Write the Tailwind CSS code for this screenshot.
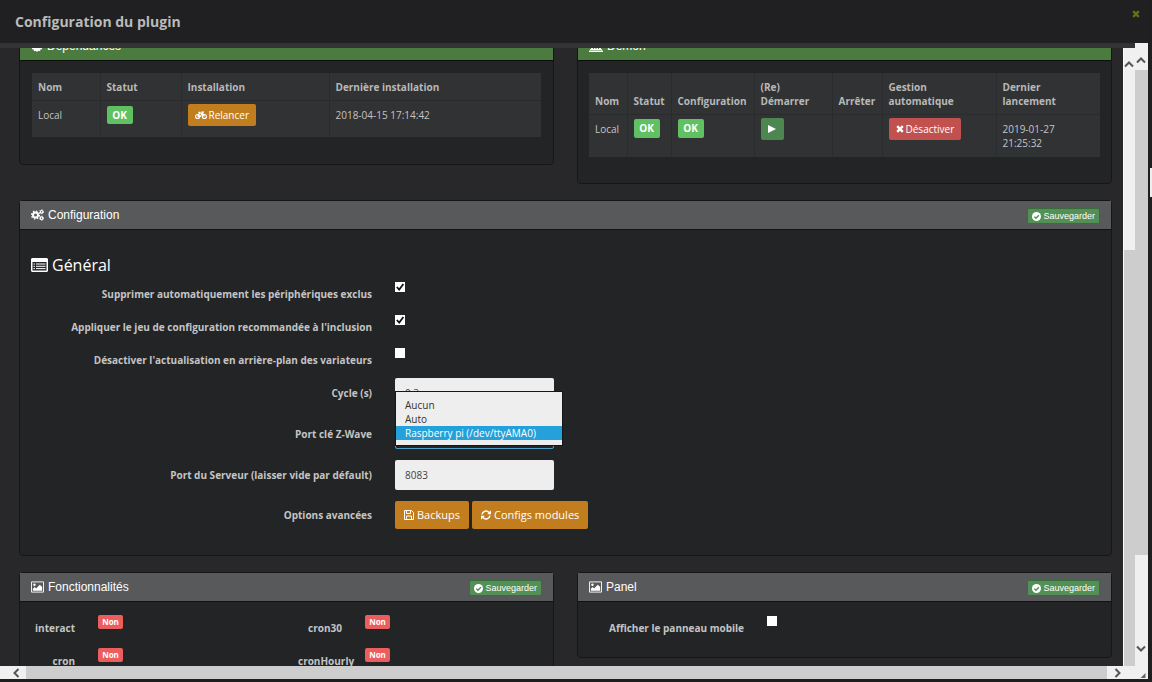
<!DOCTYPE html>
<html lang="fr">
<head>
<meta charset="utf-8">
<title>Configuration du plugin</title>
<script src="https://cdn.jsdelivr.net/npm/@tailwindcss/browser@4"></script>
</head>
<body class="h-screen overflow-hidden bg-[#1b1a1b] font-['Open_Sans','Noto_Sans',sans-serif] text-[10px] leading-[14px] text-[#c4c4c4]">
<svg class="hidden" aria-hidden="true">
  <symbol id="i-check" viewBox="0 0 16 16"><circle cx="8" cy="8" r="8" fill="currentColor"/><path d="M4 8.2l3 3 5.2-5.4" fill="none" stroke="#4f8f52" stroke-width="2.4"/></symbol>
  <symbol id="i-tick" viewBox="0 0 10 10"><path d="M1.800 5l2.400 2.600L8.400 2" fill="none" stroke="#111" stroke-width="1.800"/></symbol>
  <symbol id="i-picture" viewBox="0 0 14 12"><path d="M.5.5h13v11H.5z" fill="none" stroke="currentColor"/><circle cx="3.7" cy="3.6" r="1.3" fill="currentColor"/><path d="M2 10V8l2-2 1.5 1.5L9.500 3.500 12 6v4z" fill="currentColor"/></symbol>
  <symbol id="i-times" viewBox="0 0 10 10"><path d="M1.500 1.500l7 7M8.500 1.500l-7 7" stroke="currentColor" stroke-width="3"/></symbol>
  <symbol id="i-up" viewBox="0 0 10 8"><path d="M1 6.500l4-4 4 4" fill="none" stroke="#555" stroke-width="2"/></symbol>
</svg>
<div class="flex h-full">
  <div class="flex min-w-0 flex-1 flex-col">
    <header class="flex h-[43px] shrink-0 items-start justify-between bg-[#202022] pl-[15px] pr-2">
      <h1 class="pt-3 text-sm leading-5 font-bold text-[#bababa]">Configuration du plugin</h1>
      <button type="button" aria-label="Fermer" class="mt-[10px] text-[#6b6d12]"><svg class="size-2"><use href="#i-times"/></svg></button>
    </header>

    <div class="flex min-h-0 flex-1">
      <div class="flex min-w-0 flex-1 flex-col">
        <div class="h-[5px] shrink-0 bg-[#333335]"></div>
        <div class="flex min-h-0 flex-1">
          <main class="min-w-0 flex-1 overflow-hidden bg-[#28282a] pr-[11px] pl-[19px]">
            <div class="-mt-[17px] flex flex-col gap-4">

              <div class="grid grid-cols-2 items-start gap-[23px]">
                <section class="rounded-sm border border-[#151617] bg-[#232426]">
                  <h2 class="flex h-[29px] items-center gap-1 border-b border-[#0d0f0d] bg-[#4b7b3f] px-[11px] font-['Liberation_Sans',Arial,sans-serif] text-xs text-white">
                    <svg class="size-3" viewBox="0 0 12 12" fill="currentColor"><path d="M6 0l1.300 1.300L9 .8l.5 1.700 1.700.5-.5 1.700L12 6l-1.300 1.300.5 1.700-1.700.5L9 11.200l-1.700-.5L6 12l-1.300-1.300-1.700.5-.5-1.700L.8 9l.5-1.700L0 6l1.300-1.300L.8 3l1.700-.5L3 .8l1.700.5z"/></svg>Dépendances</h2>
                  <div class="px-3 pt-3 pb-[27px]">
                    <table class="w-full table-fixed bg-[#313234] text-left align-top">
                      <colgroup><col class="w-[68px]"><col class="w-[81px]"><col class="w-[148px]"><col></colgroup>
                      <thead class="text-[#b8b8b8]"><tr class="h-[27px]">
                        <th class="border-r border-[#2a2b2d] px-1.5 pt-0.5">Nom</th><th class="border-r border-[#2a2b2d] px-1.5 pt-0.5">Statut</th><th class="border-r border-[#2a2b2d] px-1.5 pt-0.5">Installation</th><th class="px-1.5 pt-0.5">Dernière installation</th></tr></thead>
                      <tbody class="border-t border-[#2a2b2d]"><tr class="h-[37px] align-top">
                        <td class="border-r border-[#2a2b2d] px-1.5 pt-[7px]">Local</td>
                        <td class="border-r border-[#2a2b2d] px-1.5 pt-[5px]"><span class="block h-[18px] w-[26px] rounded-xs bg-[#5fc162] text-center leading-[18px] font-bold text-white">OK</span></td>
                        <td class="border-r border-[#2a2b2d] px-1.5 pt-[3px]"><button type="button" class="flex h-[22px] items-center gap-0.5 rounded-xs bg-[#c27e1e] px-[7px] text-white">
                          <svg class="h-2.5 w-3" viewBox="0 0 16 11" fill="none" stroke="currentColor" stroke-width="1.500"><circle cx="3.500" cy="7.500" r="2.700"/><circle cx="12.500" cy="7.500" r="2.700"/><path d="M3.500 7.500L6 3h4l-3 4.500H3.500M4.500 2h2.500M12.500 7.500L9.500 1.500h2.500"/></svg>Relancer</button></td>
                        <td class="px-1.5 pt-[7px]">2018-04-15 17:14:42</td></tr></tbody>
                    </table>
                  </div>
                </section>

                <section class="rounded-sm border border-[#151617] bg-[#232426]">
                  <h2 class="flex h-[29px] items-center gap-1 border-b border-[#0d0f0d] bg-[#4b7b3f] px-[11px] font-['Liberation_Sans',Arial,sans-serif] text-xs text-white">
                    <svg class="h-3 w-3.5" viewBox="0 0 14 12" fill="currentColor"><path d="M7 0l7 3v1H0V3zM2 4.500h2V9h1V4.500h1.500V9h1V4.500H9V9h1V4.500h2V9h1v1H1V9h1zM0 10.500h14V12H0z"/></svg>Démon</h2>
                  <div class="px-[11px] pt-3 pb-[26px]">
                    <table class="w-full table-fixed bg-[#313234] text-left">
                      <colgroup><col class="w-[38px]"><col class="w-[44px]"><col class="w-[83px]"><col class="w-[78px]"><col class="w-[50px]"><col class="w-[114px]"><col></colgroup>
                      <thead class="text-[#b8b8b8]"><tr class="h-[41px] align-bottom">
                        <th class="border-r border-[#2a2b2d] pb-1.5 pl-1.5">Nom</th><th class="border-r border-[#2a2b2d] pb-1.5 pl-1.5">Statut</th><th class="border-r border-[#2a2b2d] pb-1.5 pl-1.5">Configuration</th><th class="border-r border-[#2a2b2d] pb-1.5 pl-1.5">(Re)<br>Démarrer</th><th class="border-r border-[#2a2b2d] pb-1.5 pl-1.5">Arrêter</th><th class="border-r border-[#2a2b2d] pb-1.5 pl-1.5">Gestion<br>automatique</th><th class="pb-1.5 pl-1.5">Dernier<br>lancement</th></tr></thead>
                      <tbody class="border-t border-[#2a2b2d]"><tr class="h-[43px] align-top">
                        <td class="border-r border-[#2a2b2d] pt-[7px] pl-1.5">Local</td>
                        <td class="border-r border-[#2a2b2d] pt-1 pl-1.5"><span class="block h-[19px] w-[26px] rounded-xs bg-[#5fc162] text-center leading-[19px] font-bold text-white">OK</span></td>
                        <td class="border-r border-[#2a2b2d] pt-1 pl-1.5"><span class="block h-[19px] w-[26px] rounded-xs bg-[#5fc162] text-center leading-[19px] font-bold text-white">OK</span></td>
                        <td class="border-r border-[#2a2b2d] pt-[3px] pl-1.5"><button type="button" aria-label="Démarrer" class="flex h-[22px] w-[23px] items-center justify-center rounded-xs bg-[#4d8650] text-white"><svg class="size-2" viewBox="0 0 8 8"><path d="M0 0l8 4-8 4z" fill="currentColor"/></svg></button></td>
                        <td class="border-r border-[#2a2b2d]"></td>
                        <td class="border-r border-[#2a2b2d] pt-[3px] pl-1.5"><button type="button" class="flex h-[22px] items-center gap-0.5 rounded-xs bg-[#c0514e] px-[7px] text-white"><svg class="size-2"><use href="#i-times"/></svg>Désactiver</button></td>
                        <td class="pt-[7px] pl-1.5">2019-01-27<br>21:25:32</td></tr></tbody>
                    </table>
                  </div>
                </section>
              </div>

              <section class="rounded-sm border border-[#151617] bg-[#232426]">
                <div class="flex h-[29px] items-end justify-between border-b border-[#121213] bg-[#58595b] px-[11px] pb-[5px] font-['Liberation_Sans',Arial,sans-serif]">
                  <h2 class="flex h-[18px] items-center gap-1 text-xs text-white">
                    <svg class="h-3 w-[13px]" viewBox="0 0 13 12" fill="none" stroke="currentColor"><circle cx="4.500" cy="6" r="2.500" stroke-width="2"/><circle cx="4.500" cy="6" r="3.900" stroke-width="1.400" stroke-dasharray="1.530 1.530"/><circle cx="10.600" cy="2.800" r="1.300" stroke-width="1.200"/><circle cx="10.600" cy="2.800" r="2.100" stroke-width=".8" stroke-dasharray="1.100 1.100"/><circle cx="10.600" cy="9.200" r="1.300" stroke-width="1.200"/><circle cx="10.600" cy="9.200" r="2.100" stroke-width=".8" stroke-dasharray="1.100 1.100"/></svg>Configuration</h2>
                  <button type="button" class="flex h-4 items-center gap-0.5 rounded-xs border border-[#3d6b40] bg-[#529055] px-1 text-[9px] text-white"><svg class="size-[9px]"><use href="#i-check"/></svg>Sauvegarder</button>
                </div>
                <form class="px-[11px] pb-[26px]">
                  <h3 class="flex h-[49px] items-end gap-1 pb-0.5 text-base leading-6 text-white">
                    <svg class="mb-[5px] h-[14px] w-[17px]" viewBox="0 0 17 14"><path d="M1 0h15l1 1v12l-1 1H1l-1-1V1zM1.500 4v8.500h14V4z" fill="currentColor" fill-rule="evenodd"/><path d="M2.500 6h1.500M2.500 8.300h1.500M2.500 10.600h1.500M5 6h9.500M5 8.300h9.500M5 10.600h9.500" stroke="currentColor"/></svg>Général</h3>
                  <div class="grid grid-cols-[341px_1fr] gap-x-[23px]">
                    <label for="o1" class="flex h-[33px] items-center justify-end pb-[3px] font-bold">Supprimer automatiquement les périphériques exclus</label>
                    <div class="pt-[3px]"><div class="relative size-[10px]"><input id="o1" type="checkbox" checked class="peer block size-[10px] appearance-none bg-white"><svg class="pointer-events-none absolute inset-0 hidden size-[10px] peer-checked:block"><use href="#i-tick"/></svg></div></div>
                    <label for="o2" class="flex h-[33px] items-center justify-end pb-[3px] font-bold">Appliquer le jeu de configuration recommandée à l'inclusion</label>
                    <div class="pt-[3px]"><div class="relative size-[10px]"><input id="o2" type="checkbox" checked class="peer block size-[10px] appearance-none bg-white"><svg class="pointer-events-none absolute inset-0 hidden size-[10px] peer-checked:block"><use href="#i-tick"/></svg></div></div>
                    <label for="o3" class="flex h-[33px] items-center justify-end pb-[3px] font-bold">Désactiver l'actualisation en arrière-plan des variateurs</label>
                    <div class="pt-[3px]"><div class="relative size-[10px]"><input id="o3" type="checkbox" class="peer block size-[10px] appearance-none bg-white"><svg class="pointer-events-none absolute inset-0 hidden size-[10px] peer-checked:block"><use href="#i-tick"/></svg></div></div>
                    <label for="cycle" class="flex h-[41px] items-center justify-end pb-3 font-bold">Cycle (s)</label>
                    <div><input id="cycle" type="text" value="0.3" class="block h-[30px] w-[159px] rounded-xs bg-[#eee] px-2.5 text-[#444]"></div>
                    <label for="port" class="flex h-[41px] items-center justify-end pb-3 font-bold">Port clé Z-Wave</label>
                    <div class="relative">
                      <select id="port" class="block h-[30px] w-[159px] appearance-none rounded-xs border border-[#4f9fc4] bg-[#232426] px-2.5 text-[#232426]"><option>Raspberry pi (/dev/ttyAMA0)</option></select>
                      <ul role="listbox" aria-label="Port clé Z-Wave" class="absolute -top-7 left-0 w-[168px] border border-[#151617] bg-[#eee] pt-1.5 pb-[5px] text-[#333]">
                        <li role="option" class="px-[9px]">Aucun</li>
                        <li role="option" class="px-[9px]">Auto</li>
                        <li role="option" aria-selected="true" class="bg-[#24a0da] px-[9px] text-white">Raspberry pi (/dev/ttyAMA0)</li>
                      </ul>
                    </div>
                    <label for="srv" class="flex h-[41px] items-center justify-end pb-3 font-bold">Port du Serveur (laisser vide par défault)</label>
                    <div><input id="srv" type="text" value="8083" class="block h-[30px] w-[159px] rounded-xs bg-[#eee] px-2.5 text-[#444]"></div>
                    <div class="flex h-[28px] items-center justify-end font-bold">Options avancées</div>
                    <div class="flex gap-[3px] text-[11px] text-white">
                      <button type="button" class="flex h-[28px] items-center gap-[3px] rounded-xs bg-[#c27e1e] px-[9px]"><svg class="size-[10px]" viewBox="0 0 10 10" fill="none" stroke="currentColor"><path d="M.5.5h7l2 2v7h-9zM2.500.5v3h4v-3M2.500 9.500v-3.500h5v3.500"/></svg>Backups</button>
                      <button type="button" class="flex h-[28px] items-center gap-[3px] rounded-xs bg-[#c27e1e] px-[9px]"><svg class="size-[10px]" viewBox="0 0 10 10"><path d="M1 4.500A4 4 0 0 1 8 2.500M9 5.500A4 4 0 0 1 2 7.500" fill="none" stroke="currentColor" stroke-width="1.500"/><path d="M10 .3V4.200H6.100zM0 9.700V5.800h3.900z" fill="currentColor"/></svg>Configs modules</button>
                    </div>
                  </div>
                </form>
              </section>

              <div class="grid grid-cols-2 items-start gap-[23px]">
                <section class="rounded-sm border border-[#151617] bg-[#232426]">
                  <div class="flex h-[29px] items-end justify-between border-b border-[#121213] bg-[#58595b] px-[11px] pb-[5px] font-['Liberation_Sans',Arial,sans-serif]">
                    <h2 class="flex h-[18px] items-center gap-1 text-xs text-white"><svg class="h-3 w-[13px]"><use href="#i-picture"/></svg>Fonctionnalités</h2>
                    <button type="button" class="flex h-4 items-center gap-0.5 rounded-xs border border-[#3d6b40] bg-[#529055] px-1 text-[9px] text-white"><svg class="size-[9px]"><use href="#i-check"/></svg>Sauvegarder</button>
                  </div>
                  <div class="grid grid-cols-[44px_177px_44px_1fr] gap-x-[23px] px-[11px] pt-3">
                    <div class="flex h-[33px] justify-end pt-[7px] font-bold">interact</div>
                    <div class="pt-px"><span class="block h-[14px] w-[25px] rounded-xs bg-[#ec5d5d] text-center text-[8px] font-bold text-white">Non</span></div>
                    <div class="flex h-[33px] justify-end pt-[7px] font-bold">cron30</div>
                    <div class="pt-px"><span class="block h-[14px] w-[25px] rounded-xs bg-[#ec5d5d] text-center text-[8px] font-bold text-white">Non</span></div>
                    <div class="flex h-[33px] justify-end pt-[7px] font-bold">cron</div>
                    <div class="pt-px"><span class="block h-[14px] w-[25px] rounded-xs bg-[#ec5d5d] text-center text-[8px] font-bold text-white">Non</span></div>
                    <div class="h-[33px] pt-[7px] font-bold">cronHourly</div>
                    <div class="pt-px"><span class="block h-[14px] w-[25px] rounded-xs bg-[#ec5d5d] text-center text-[8px] font-bold text-white">Non</span></div>
                  </div>
                </section>
                <section class="rounded-sm border border-[#151617] bg-[#232426]">
                  <div class="flex h-[29px] items-end justify-between border-b border-[#121213] bg-[#58595b] px-[11px] pb-[5px] font-['Liberation_Sans',Arial,sans-serif]">
                    <h2 class="flex h-[18px] items-center gap-1 text-xs text-white"><svg class="h-3 w-[13px]"><use href="#i-picture"/></svg>Panel</h2>
                    <button type="button" class="flex h-4 items-center gap-0.5 rounded-xs border border-[#3d6b40] bg-[#529055] px-1 text-[9px] text-white"><svg class="size-[9px]"><use href="#i-check"/></svg>Sauvegarder</button>
                  </div>
                  <div class="grid grid-cols-[155px_1fr] gap-x-[23px] px-[11px] pt-3 pb-2.5">
                    <label for="mob" class="flex h-[33px] justify-end pt-[7px] font-bold">Afficher le panneau mobile</label>
                    <div class="pt-0.5"><input id="mob" type="checkbox" class="block size-[10px] appearance-none bg-white"></div>
                  </div>
                </section>
              </div>
            </div>
          </main>
          <!-- inner scrollbar -->
          <div class="flex w-[12px] shrink-0 flex-col border-l border-[#fafafa] bg-[#f0f0f0]">
            <div class="h-[202px] pt-3"><svg class="h-2 w-[10px]"><use href="#i-up"/></svg></div>
            <div class="flex-1 bg-[#cdcdcd]"></div>
          </div>
        </div>
      </div>
      <!-- outer scrollbar -->
      <div class="flex w-[13px] shrink-0 flex-col bg-[#f0f0f0]">
        <div class="h-[27px] pt-[13px] pl-px"><svg class="h-2 w-[10px]"><use href="#i-up"/></svg></div>
        <div class="h-[485px] bg-[#cdcdcd]"></div>
        <div class="flex flex-1 flex-col justify-end pb-[13px] pl-px"><svg class="h-2 w-[10px] rotate-180"><use href="#i-up"/></svg></div>
      </div>
    </div>
    <!-- horizontal scrollbar -->
    <div class="flex h-[13px] shrink-0 bg-[#f0f0f0]">
      <div class="flex w-[26px] items-center pl-[11px]"><svg class="h-2 w-[10px] -rotate-90"><use href="#i-up"/></svg></div>
      <div class="flex-1 bg-[#cdcdcd]"></div>
      <div class="flex w-[41px] items-center justify-between pl-1.5"><svg class="h-2 w-[10px] rotate-90"><use href="#i-up"/></svg><svg class="mr-0.5 size-1.5 self-end pb-px" viewBox="0 0 6 6"><path d="M6 0v6H0z" fill="#666"/></svg></div>
    </div>
    <div class="h-[3px] shrink-0 bg-[#1f1e1f]"></div>
  </div>
  <div class="w-1 shrink-0 bg-[#1f1f20] pt-[168px] pl-0.5"><div class="h-[29px] bg-[#eee]"></div></div>
</div>
</body>
</html>
